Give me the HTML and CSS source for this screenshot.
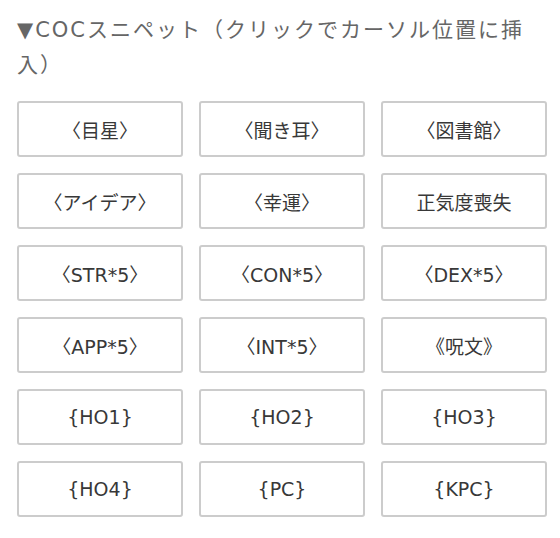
FILE: index.html
```html
<!DOCTYPE html>
<html lang="ja">
<head>
<meta charset="utf-8">
<title>COCスニペット</title>
<link rel="stylesheet" href="styles.css">
</head>
<body>
<div class="panel">
  <div class="title">▼COCスニペット（クリックでカーソル位置に挿入）</div>
  <div class="grid">
    <button class="snip">〈目星〉</button>
    <button class="snip">〈聞き耳〉</button>
    <button class="snip">〈図書館〉</button>
    <button class="snip">〈アイデア〉</button>
    <button class="snip">〈幸運〉</button>
    <button class="snip">正気度喪失</button>
    <button class="snip">〈STR*5〉</button>
    <button class="snip">〈CON*5〉</button>
    <button class="snip">〈DEX*5〉</button>
    <button class="snip">〈APP*5〉</button>
    <button class="snip">〈INT*5〉</button>
    <button class="snip">《呪文》</button>
    <button class="snip">{HO1}</button>
    <button class="snip">{HO2}</button>
    <button class="snip">{HO3}</button>
    <button class="snip">{HO4}</button>
    <button class="snip">{PC}</button>
    <button class="snip">{KPC}</button>
  </div>
</div>
</body>
</html>
```

FILE: styles.css
```css
html, body {
  margin: 0;
  padding: 0;
  background: #ffffff;
}
body {
  font-family: "DejaVu Sans", "Noto Sans CJK JP", sans-serif;
}
.panel {
  width: 530px;
  padding: 13px 0 0 17px;
}
.title {
  font-size: 21px;
  line-height: 35px;
  letter-spacing: 2px;
  color: #666666;
  margin-bottom: 18px;
}
.grid {
  display: grid;
  grid-template-columns: repeat(3, 166px);
  grid-auto-rows: 56px;
  gap: 16px;
}
.snip {
  font-family: "DejaVu Sans", "Noto Sans CJK JP", sans-serif;
  font-size: 19px;
  font-weight: normal;
  color: #383838;
  background: #ffffff;
  border: 2px solid #cccccc;
  border-radius: 3px;
  padding: 0;
  margin: 0;
  display: flex;
  align-items: center;
  justify-content: center;
  cursor: pointer;
}
```
